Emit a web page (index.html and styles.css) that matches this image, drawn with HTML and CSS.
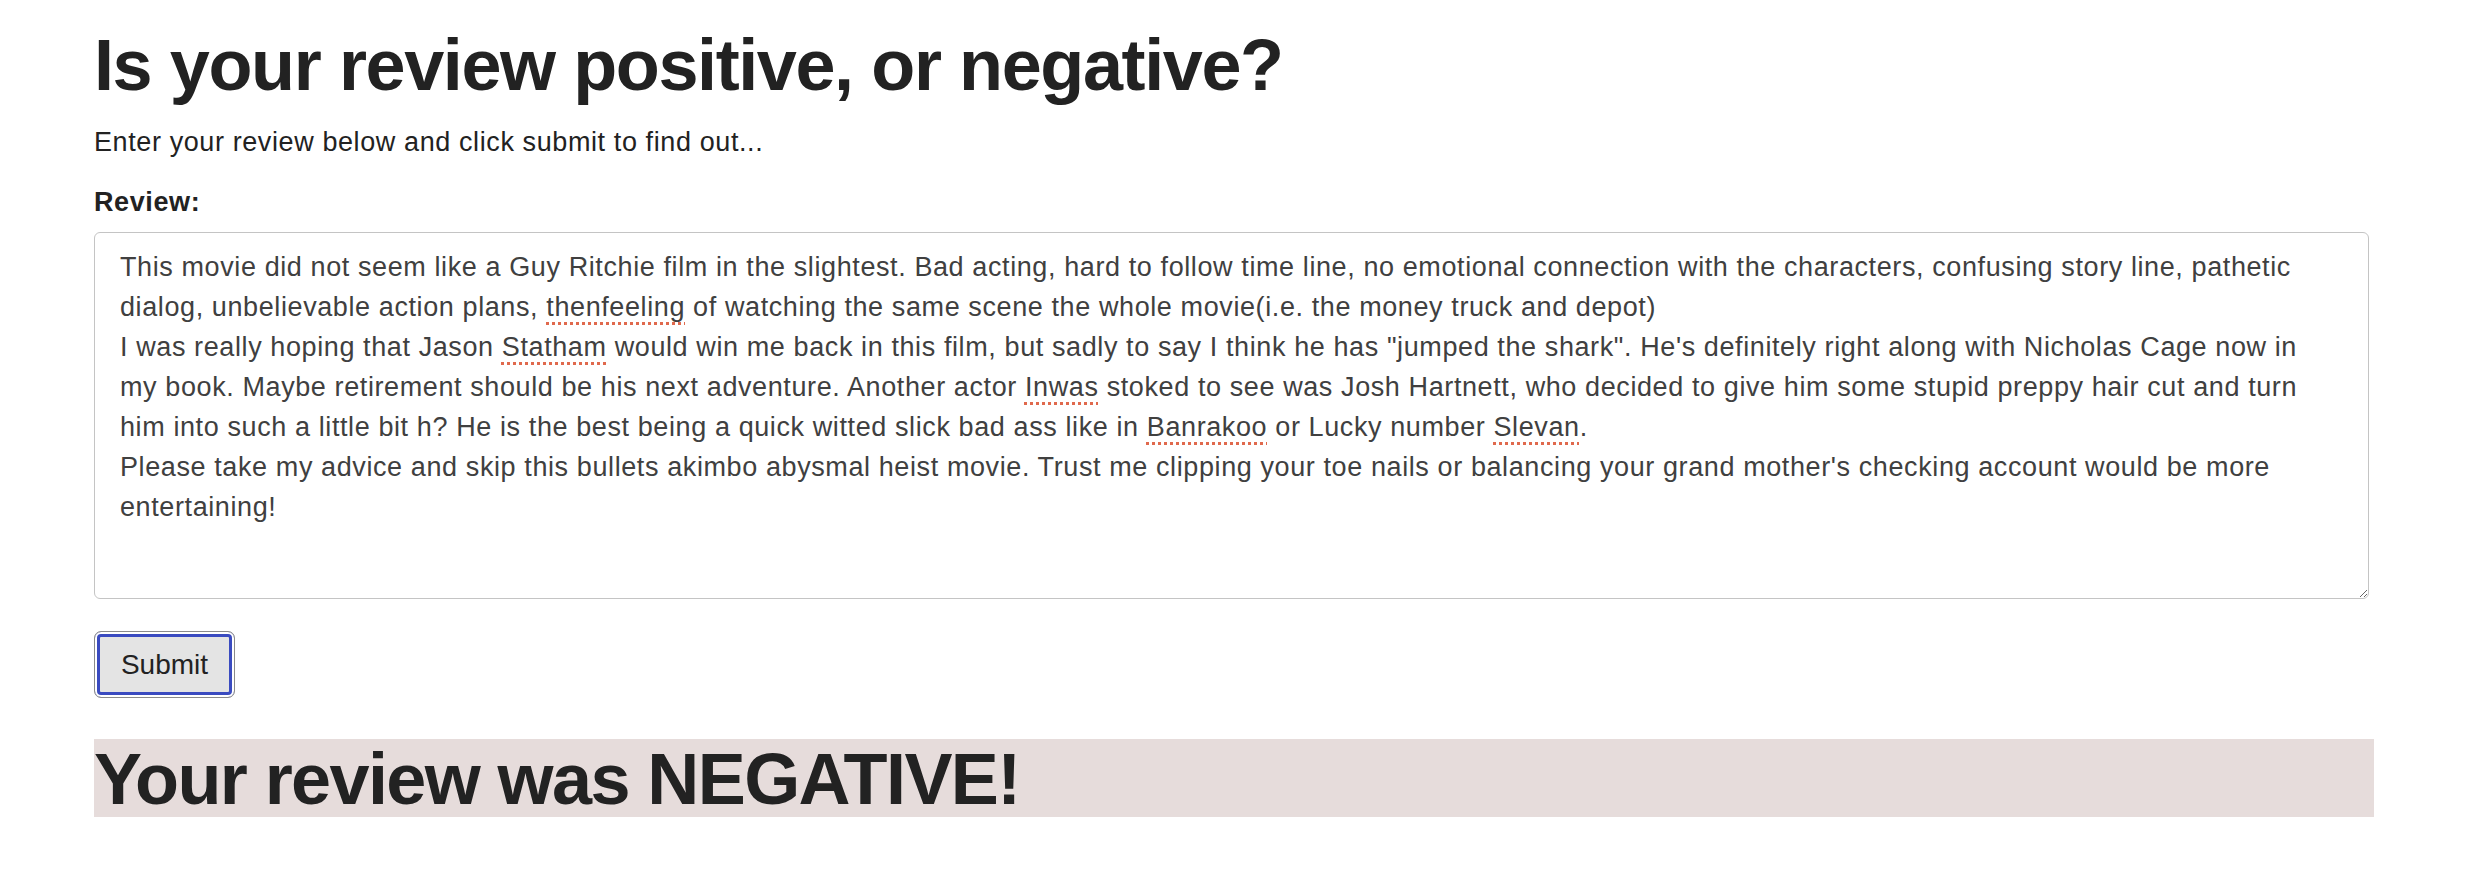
FILE: index.html
```html
<!DOCTYPE html>
<html lang="en">
<head>
<meta charset="utf-8">
<title>Review sentiment</title>
<link rel="stylesheet" href="styles.css">
</head>
<body>
<main class="page">
  <h1 class="title">Is your review positive, or negative?</h1>
  <p class="intro">Enter your review below and click submit to find out...</p>
  <form class="review-form">
    <label class="label" for="review">Review:</label>
    <div class="review-box" id="review" role="textbox" aria-multiline="true">This movie did not seem like a Guy Ritchie film in the slightest. Bad acting, hard to follow time line, no emotional connection with the characters, confusing story line, pathetic dialog, unbelievable action plans, <span class="typo">thenfeeling</span> of watching the same scene the whole movie(i.e. the money truck and depot)<br>I was really hoping that Jason <span class="typo">Statham</span> would win me back in this film, but sadly to say I think he has "jumped the shark". He's definitely right along with Nicholas Cage now in my book. Maybe retirement should be his next adventure. Another actor <span class="typo">Inwas</span> stoked to see was Josh Hartnett, who decided to give him some stupid preppy hair cut and turn him into such a little bit h? He is the best being a quick witted slick bad ass like in <span class="typo">Banrakoo</span> or Lucky number <span class="typo">Slevan</span>.<br>Please take my advice and skip this bullets akimbo abysmal heist movie. Trust me clipping your toe nails or balancing your grand mother's checking account would be more entertaining!</div>
    <button class="submit" type="button">Submit</button>
  </form>
  <h1 class="result">Your review was NEGATIVE!</h1>
</main>
</body>
</html>
```
FILE: styles.css
```css
html, body {
  margin: 0;
  padding: 0;
  background: #ffffff;
}

body {
  font-family: "Liberation Sans", Arial, Helvetica, sans-serif;
  color: #222222;
}

.page {
  padding: 0 94px;
}

.title {
  margin: 22px 0 0;
  font-size: 72px;
  line-height: 86px;
  font-weight: bold;
  letter-spacing: -1.4px;
  color: #222222;
}

.intro {
  margin: 16px 0 0;
  font-size: 27px;
  line-height: 36px;
  letter-spacing: 0.6px;
}

.review-form {
  display: flex;
  flex-direction: column;
  align-items: flex-start;
}

.label {
  display: block;
  margin-top: 24px;
  margin-bottom: 12px;
  font-size: 27px;
  line-height: 36px;
  font-weight: bold;
  letter-spacing: 0.6px;
}

.review-box {
  box-sizing: border-box;
  width: 2275px;
  height: 367px;
  padding: 14px 43px 13px 25px;
  border: 1px solid #c4c4c4;
  border-radius: 6px;
  font-size: 27px;
  line-height: 40px;
  letter-spacing: 0.6px;
  color: #404040;
  overflow: auto;
  resize: vertical;
}

.typo {
  text-decoration: underline dotted #e0694d;
  text-decoration-thickness: 3px;
  text-underline-offset: 6px;
}

.submit {
  box-sizing: border-box;
  margin-top: 32px;
  width: 141px;
  height: 67px;
  padding: 0;
  border: 1px solid #8a8a8a;
  border-radius: 7px;
  background: #e4e4e4;
  box-shadow: inset 0 0 0 2px #ffffff, inset 0 0 0 5px #3a4bc0;
  font-family: "Liberation Sans", Arial, Helvetica, sans-serif;
  font-size: 28px;
  color: #222222;
}

.result {
  margin: 41px 0 0;
  padding-top: 3px;
  font-size: 72px;
  line-height: 75px;
  font-weight: bold;
  letter-spacing: -1.6px;
  background: #e6dcdb;
  color: #222222;
}
```
